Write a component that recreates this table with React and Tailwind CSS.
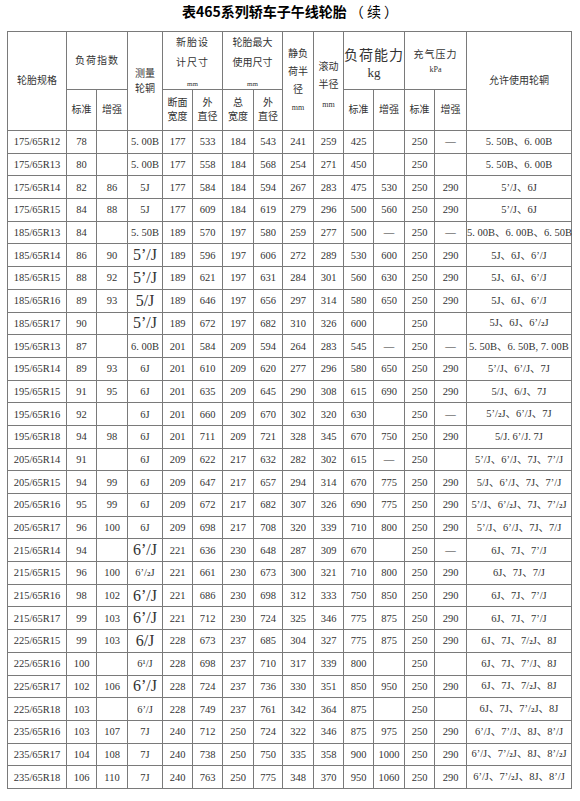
import React from "react";

const S2 = () => <span className="text-[7px] font-bold">2</span>;
const Big = ({ children }) => <span className="text-[16px] leading-none">{children}</span>;

const rows = [
  ["175/65R12", "78", "", "5. 00B", "177", "533", "184", "543", "241", "259", "425", "", "250", "—", "5. 50B、6. 00B"],
  ["175/65R13", "80", "", "5. 00B", "177", "558", "184", "568", "254", "271", "450", "", "250", "", "5. 50B、6. 00B"],
  ["175/65R14", "82", "86", "5J", "177", "584", "184", "594", "267", "283", "475", "530", "250", "290", "5’/J、6J"],
  ["175/65R15", "84", "88", "5J", "177", "609", "184", "619", "279", "296", "500", "560", "250", "290", "5’/J、6J"],
  ["185/65R13", "84", "", "5. 50B", "189", "570", "197", "580", "259", "277", "500", "—", "250", "—", "5. 00B、6. 00B、6. 50B"],
  ["185/65R14", "86", "90", <Big>5’/J</Big>, "189", "596", "197", "606", "272", "289", "530", "600", "250", "290", "5J、6J、6’/J"],
  ["185/65R15", "88", "92", <Big>5’/J</Big>, "189", "621", "197", "631", "284", "301", "560", "630", "250", "290", "5J、6J、6’/J"],
  ["185/65R16", "89", "93", <Big>5/J</Big>, "189", "646", "197", "656", "297", "314", "580", "650", "250", "290", "5J、6J、6’/J"],
  ["185/65R17", "90", "", <Big>5’/J</Big>, "189", "672", "197", "682", "310", "326", "600", "", "250", "", <>5J、6J、6’/<S2 />J</>],
  ["195/65R13", "87", "", "6. 00B", "201", "584", "209", "594", "264", "283", "545", "—", "250", "—", "5. 50B、6. 50B, 7. 00B"],
  ["195/65R14", "89", "93", "6J", "201", "610", "209", "620", "277", "296", "580", "650", "250", "290", "5’/J、6’/J、7J"],
  ["195/65R15", "91", "95", "6J", "201", "635", "209", "645", "290", "308", "615", "690", "250", "290", "5/J、6/J、7J"],
  ["195/65R16", "92", "", "6J", "201", "660", "209", "670", "302", "320", "630", "", "250", "—", <>5’/<S2 />J、6’/J、7J</>],
  ["195/65R18", "94", "98", "6J", "201", "711", "209", "721", "328", "345", "670", "750", "250", "290", "5/J. 6’/J. 7J"],
  ["205/65R14", "91", "", "6J", "209", "622", "217", "632", "282", "302", "615", "—", "250", "", "5’/J、6’/J、7J、7’/J"],
  ["205/65R15", "94", "99", "6J", "209", "647", "217", "657", "294", "314", "670", "775", "250", "290", "5/J、6’/J、7J、7’/J"],
  ["205/65R16", "95", "99", "6J", "209", "672", "217", "682", "307", "326", "690", "775", "250", "290", <>5’/J、6’/<S2 />J、7J、7’/<S2 />J</>],
  ["205/65R17", "96", "100", "6J", "209", "698", "217", "708", "320", "339", "710", "800", "250", "290", "5’/J、6’/J、7J、7/J"],
  ["215/65R14", "94", "", <Big>6’/J</Big>, "221", "636", "230", "648", "287", "309", "670", "", "250", "—", "6J、7J、7’/J"],
  ["215/65R15", "96", "100", <>6’/<S2 />J</>, "221", "661", "230", "673", "300", "321", "710", "800", "250", "290", "6J、7J、7/J"],
  ["215/65R16", "98", "102", <Big>6’/J</Big>, "221", "686", "230", "698", "312", "333", "750", "850", "250", "290", "6J、7J、7’/J"],
  ["215/65R17", "99", "103", <Big>6’/J</Big>, "221", "712", "230", "724", "325", "346", "775", "875", "250", "290", "6J、7J、7’/J"],
  ["225/65R15", "99", "103", <Big>6/J</Big>, "228", "673", "237", "685", "304", "327", "775", "875", "250", "290", <>6J、7J、7/<S2 />J、8J</>],
  ["225/65R16", "100", "", "6¹/J", "228", "698", "237", "710", "317", "339", "800", "", "250", "", "6J、7J、7’/J、8J"],
  ["225/65R17", "102", "106", <Big>6’/J</Big>, "228", "724", "237", "736", "330", "351", "850", "950", "250", "290", <>6J、7J、7/<S2 />J、8J</>],
  ["225/65R18", "103", "", "6’/J", "228", "749", "237", "761", "342", "364", "875", "", "250", "", <>6J、7J、7’/<S2 />J、8J</>],
  ["235/65R16", "103", "107", "7J", "240", "712", "250", "724", "322", "346", "875", "975", "250", "290", "6’/J、7’/J、8J、8’/J"],
  ["235/65R17", "104", "108", "7J", "240", "738", "250", "750", "335", "358", "900", "1000", "250", "290", <>6’/J、7’/<S2 />J、8J、8’/<S2 />J</>],
  ["235/65R18", "106", "110", "7J", "240", "763", "250", "775", "348", "370", "950", "1060", "250", "290", <>6’/J、7’/<S2 />J、8J、8’/J</>],
];

const widths = [59, 30, 31, 35, 30, 30, 31, 29, 31, 30, 30, 31, 30, 32, 105];

const th = "border border-[#7a7a7a] font-normal text-center align-middle p-0 text-[10px] leading-[14px] text-[#333]";
const td = "border border-[#7a7a7a] text-center align-middle p-0 pt-[1px] h-[22.7px] text-[10.5px] leading-[14px] text-[#333] whitespace-nowrap";

export default function App() {
  return (
    <div
      className="w-[580px] bg-white"
      style={{ fontFamily: "'Liberation Serif', 'Noto Sans CJK SC', serif" }}
    >
      <div className="h-[31px] pt-0 text-center text-[14px] leading-[22px] text-black">
        <span className="font-bold" style={{ fontFamily: "'Noto Sans CJK SC', sans-serif" }}>
          表465系列轿车子午线轮胎
        </span>
        <span style={{ fontFamily: "'Noto Sans CJK SC', sans-serif" }}> （ 续 ）</span>
      </div>
      <table className="ml-[7px] w-[564px] table-fixed border-collapse">
        <colgroup>
          {widths.map((w, i) => (
            <col key={i} style={{ width: w }} />
          ))}
        </colgroup>
        <thead>
          <tr className="h-[57px]">
            <th rowSpan={2} className={th}>轮胎规格</th>
            <th colSpan={2} className={th + " tracking-[1px]"}>负荷指数</th>
            <th rowSpan={2} className={th}>
              <div className="leading-[15px]">测量</div>
              <div className="leading-[15px]">轮辋</div>
            </th>
            <th colSpan={2} className={th + " align-top"}>
              <div className="leading-[20px] pt-[1px] tracking-[1px]">新胎设</div>
              <div className="leading-[20px] tracking-[1px]">计尺寸</div>
              <div className="leading-[10px] pt-[6px] text-[7px]">mm</div>
            </th>
            <th colSpan={2} className={th + " align-top"}>
              <div className="leading-[20px] pt-[1px]">轮胎最大</div>
              <div className="leading-[20px]">使用尺寸</div>
              <div className="leading-[10px] pt-[6px] text-[7px]">mm</div>
            </th>
            <th rowSpan={2} className={th}>
              <div className="leading-[18px]">静负</div>
              <div className="leading-[18px]">荷半</div>
              <div className="leading-[18px]">径</div>
              <div className="leading-[18px] text-[8px]">mm</div>
            </th>
            <th rowSpan={2} className={th + " align-top"}>
              <div className="pt-[26px] leading-[18px]">滚动</div>
              <div className="leading-[18px]">半径</div>
              <div className="leading-[18px] pt-[2px] text-[8px]">mm</div>
            </th>
            <th colSpan={2} className={th + " align-top"}>
              <div className="pt-[15px] text-[14px] leading-[18px] tracking-[1px]">负荷能力</div>
              <div className="text-[13px] leading-[16px]">kg</div>
            </th>
            <th colSpan={2} className={th + " align-top"}>
              <div className="pt-[16px] leading-[14px] tracking-[1px]">充气压力</div>
              <div className="text-[8px] leading-[16px]">kPa</div>
            </th>
            <th rowSpan={2} className={th}>允许使用轮辋</th>
          </tr>
          <tr className="h-[41px]">
            <th className={th}>标准</th>
            <th className={th}>增强</th>
            <th className={th}>
              <div>断面</div>
              <div>宽度</div>
            </th>
            <th className={th}>
              <div>外</div>
              <div>直径</div>
            </th>
            <th className={th}>
              <div>总</div>
              <div>宽度</div>
            </th>
            <th className={th}>
              <div>外</div>
              <div>直径</div>
            </th>
            <th className={th}>标准</th>
            <th className={th}>增强</th>
            <th className={th}>标准</th>
            <th className={th}>增强</th>
          </tr>
        </thead>
        <tbody>
          {rows.map((r, i) => (
            <tr key={i}>
              {r.map((c, j) => (
                <td key={j} className={td}>
                  {c}
                </td>
              ))}
            </tr>
          ))}
        </tbody>
      </table>
    </div>
  );
}
